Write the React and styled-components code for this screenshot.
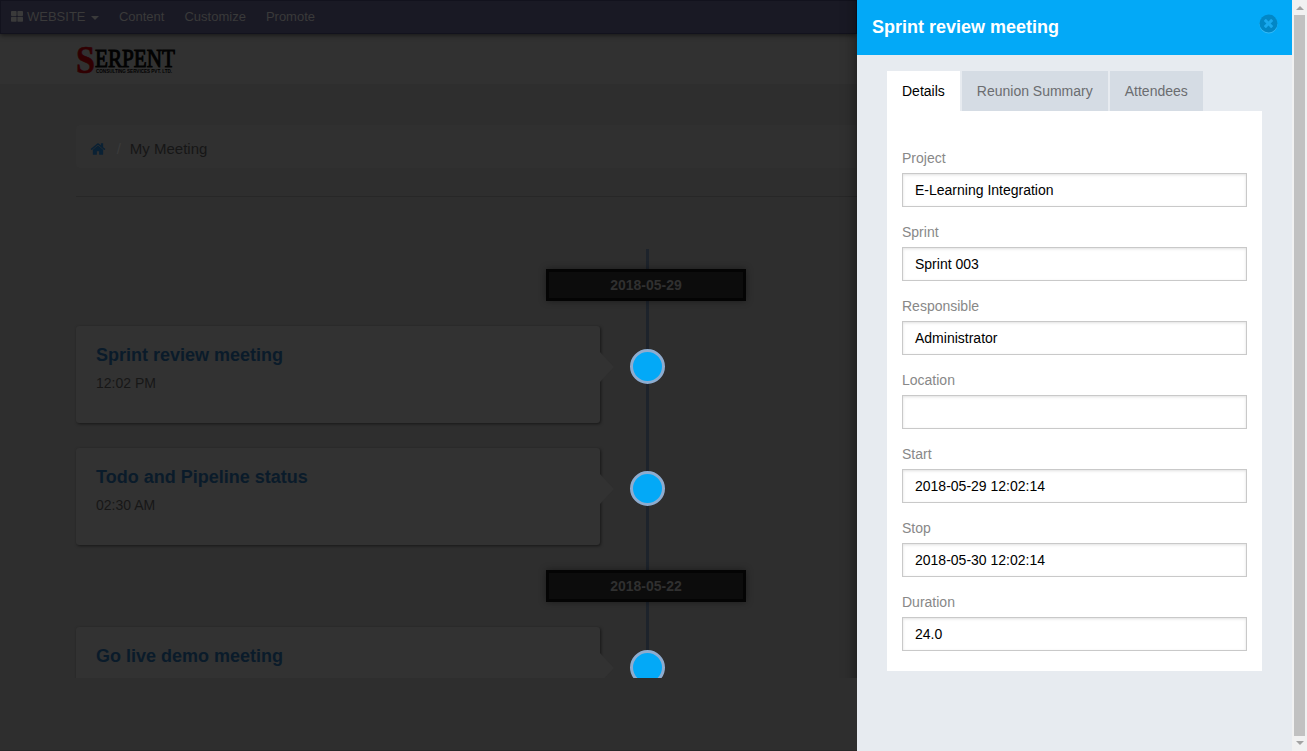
import React from "react";
import styled, { createGlobalStyle, css } from "styled-components";

const GlobalStyle = createGlobalStyle`
  *, *::before, *::after { box-sizing: border-box; }
  body {
    margin: 0;
    overflow: hidden;
    background: #2e2e2e;
    font-family: "Liberation Sans", Arial, sans-serif;
    font-size: 14px;
    line-height: 20px;
  }
`;

const Screen = styled.div`
  display: flex;
  width: 1307px;
  height: 751px;
  overflow: hidden;
`;

const Page = styled.div`
  flex: 1;
  min-width: 0;
  background: #2e2e2e;
  border-bottom: 1px solid #282828;
`;

const Viewport = styled.div`
  position: relative;
  height: 678px;
  overflow: hidden;

  &::after {
    content: "";
    position: absolute;
    top: -20px;
    bottom: -20px;
    left: 100%;
    width: 40px;
    box-shadow: 0 0 15px rgba(0, 0, 0, 0.5);
  }
`;

const Navbar = styled.nav`
  position: relative;
  display: flex;
  align-items: center;
  gap: 20px;
  height: 34px;
  padding: 0 10px;
  background: #191924;
  border: 1px solid #12121d;
  box-shadow: 0 1px 5px rgba(0, 0, 0, 0.6);
  color: #3a3a3a;
  font-size: 13px;
`;

const NavItem = styled.span`
  display: flex;
  align-items: center;
  height: 18px;
`;

const Caret = styled.i`
  margin: 2px 0 0 5.4px;
  border: 4px solid transparent;
  border-top-color: #3a3a3a;
  border-bottom: 0;
`;

const Header = styled.header`
  height: 50px;
  padding: 10px 0 0 76px;
  background: #313131;
`;

const LogoSvg = styled.svg`
  display: block;
  overflow: visible;
`;

const Container = styled.main`
  width: 1140px;
  padding-top: 41px;
  margin-left: 76px;
`;

const Breadcrumb = styled.div`
  display: flex;
  align-items: center;
  height: 43px;
  padding: 5px 15px 0;
  border-radius: 4px;
  background: #303030;
  color: #161616;
  font-size: 15px;
`;

const Slash = styled.span`
  margin: 0 9px 0 11.7px;
  color: #3b3b3b;
`;

const Rule = styled.hr`
  height: 1px;
  margin: 28px 0 0;
  border: 0;
  background: #272727;
`;

const Timeline = styled.section`
  position: relative;
  width: 1140px;
  height: 600px;
  margin-top: 52px;
  padding-top: 20px;

  &::before {
    content: "";
    position: absolute;
    top: 0;
    bottom: 0;
    left: 570px;
    width: 3px;
    background: #1d232b;
  }
`;

const DateBadge = styled.div`
  position: relative;
  width: 200px;
  height: 32px;
  margin: 0 0 25px 470px;
  border: 3px solid #040404;
  background: #0c0c0c;
  box-shadow: 0 0 7px rgba(0, 0, 0, 0.4);
  color: #303030;
  font-weight: bold;
  line-height: 27px;
  text-align: center;
`;

const Entry = styled.div`
  display: flex;
  gap: 30px;
  height: 97px;
  margin-bottom: 25px;
`;

const Card = styled.article`
  position: relative;
  width: 524px;
  padding: 19px 20px;
  border-radius: 3px;
  background: #323232;
  box-shadow: 1px 1px 3px rgba(0, 0, 0, 0.5);

  &::after {
    content: "";
    position: absolute;
    top: 26px;
    left: 100%;
    border: 15px solid transparent;
    border-left: 14px solid #323232;
    border-right: 0;
  }
`;

const CardTitle = styled.h4`
  margin: 0 0 8px;
  color: #0a1b2a;
  font-size: 18px;
  line-height: 20px;
`;

const CardTime = styled.div`
  color: #171717;
`;

const Dot = styled.span`
  position: relative;
  width: 35px;
  height: 35px;
  margin-top: 23px;
  border: 3px solid #8eaccf;
  border-radius: 50%;
  background: #03a9f7;
`;

const Panel = styled.aside`
  position: relative;
  width: 435px;
  background: #e7ebf0;
`;

const PanelHeader = styled.div`
  display: flex;
  justify-content: space-between;
  height: 55px;
  padding: 13px 13.5px 0 15px;
  background: #03a9f7;
`;

const PanelTitle = styled.h3`
  margin: 4px 0 0;
  color: #fff;
  font-size: 18px;
  line-height: 20px;
`;

const Tabs = styled.div`
  display: flex;
  gap: 2px;
  margin: 16px 30px 0;
`;

const Tab = styled.div`
  height: 40px;
  padding: 0 15px;
  background: #d5dce4;
  color: #6b6d70;
  line-height: 40px;
  ${({ $active }) => $active && css`
    background: #fff;
    color: #000;
  `}
`;

const Form = styled.div`
  height: 560px;
  margin: 0 30px;
  padding: 37px 15px 0;
  background: #fff;
`;

const Field = styled.label`
  display: block;
  margin-bottom: 15px;
  color: #888;
`;

const Input = styled.div`
  height: 34px;
  margin-top: 5px;
  padding: 0 12px;
  border: 1px solid #c9c9c9;
  background: #fff;
  box-shadow: inset 0 1px 3px rgba(0, 0, 0, 0.12);
  color: #000;
  line-height: 32px;
`;

const Scrollbar = styled.div`
  display: flex;
  flex-direction: column;
  align-items: center;
  width: 15px;
  background: #f1f1f1;
`;

const Thumb = styled.div`
  flex: 1;
  width: 11px;
  background: #c1c1c1;
`;

const ArrowSlot = styled.div`
  display: flex;
  justify-content: center;
  height: 15px;
  padding-top: ${({ $up }) => ($up ? 6 : 5)}px;
`;

const Arrow = styled.i`
  height: 4px;
  border: 4px solid transparent;
  ${({ $up }) => $up
    ? css`border-top: 0; border-bottom-color: #a3a3a3;`
    : css`border-bottom: 0; border-top-color: #a3a3a3;`}
`;

const GridMark = styled.svg`
  margin: 0 4px 2px 0;
`;

const GridIcon = () => (
  <GridMark width="12" height="11" viewBox="0 0 12 11" fill="#3a3a3a">
    <rect width="5.6" height="5" rx=".7" />
    <rect x="6.4" width="5.6" height="5" rx=".7" />
    <rect y="5.8" width="5.6" height="5" rx=".7" />
    <rect x="6.4" y="5.8" width="5.6" height="5" rx=".7" />
  </GridMark>
);

const HomeMark = styled.svg`
  margin: 0 -1px 1px -1px;
`;

const HomeIcon = () => (
  <HomeMark width="16" height="16" viewBox="0 0 1792 1792" fill="#0a2134">
    <path d="M1472 992v480q0 26-19 45t-45 19h-384v-384h-256v384h-384q-26 0-45-19t-19-45v-480q0-1 .5-3t.5-3l575-474 575 474q1 2 1 6zm223-69l-62 74q-8 9-21 11h-3q-13 0-21-7l-692-577-692 577q-12 8-24 7-13-2-21-11l-62-74q-8-10-7-23.5t11-21.5l719-599q32-26 76-26t76 26l244 204v-195q0-14 9-23t23-9h192q14 0 23 9t9 23v408l219 182q10 8 11 21.5t-7 23.5z" />
  </HomeMark>
);

const CloseIcon = () => (
  <svg width="21" height="21" viewBox="0 0 1792 1792">
    <circle cx="896" cy="981" r="768" fill="#35baf8" />
    <circle cx="896" cy="896" r="768" fill="#0287c6" />
    <path fill="#1aa9ee" d="M1277 1122q0-26-19-45l-181-181 181-181q19-19 19-45 0-27-19-46l-90-90q-19-19-46-19-26 0-45 19l-181 181-181-181q-19-19-45-19-27 0-46 19l-90 90q-19 19-19 46 0 26 19 45l181 181-181 181q-19 19-19 45 0 27 19 46l90 90q19 19 46 19 26 0 45-19l181-181 181 181q19 19 45 19 27 0 46-19l90-90q19-19 19-46z" />
  </svg>
);

const Logo = () => (
  <LogoSvg width="104" height="40" viewBox="0 0 104 40" fontFamily="'Liberation Serif', serif" fontWeight="bold">
    <text x="0" y="28.5" fontSize="39" textLength="19" lengthAdjust="spacingAndGlyphs" fill="#300002" stroke="#300002" strokeWidth=".6">S</text>
    <text x="19" y="23" fontSize="25" fontWeight="normal" textLength="80" lengthAdjust="spacingAndGlyphs" fill="#020202" stroke="#020202" strokeWidth="1">ERPENT</text>
    <text x="20" y="28.5" fontSize="5" fontFamily="'Liberation Sans', sans-serif" textLength="76" lengthAdjust="spacingAndGlyphs" fill="#020202">CONSULTING SERVICES PVT. LTD.</text>
  </LogoSvg>
);

const days = [
  { date: "2018-05-29", meetings: [["Sprint review meeting", "12:02 PM"], ["Todo and Pipeline status", "02:30 AM"]] },
  { date: "2018-05-22", meetings: [["Go live demo meeting", ""]] },
];

const fields = [
  ["Project", "E-Learning Integration"],
  ["Sprint", "Sprint 003"],
  ["Responsible", "Administrator"],
  ["Location", ""],
  ["Start", "2018-05-29 12:02:14"],
  ["Stop", "2018-05-30 12:02:14"],
  ["Duration", "24.0"],
];

export default function App() {
  return (
    <>
      <GlobalStyle />
      <Screen>
        <Page>
          <Viewport>
            <Navbar>
              <NavItem><GridIcon />WEBSITE<Caret /></NavItem>
              <NavItem>Content</NavItem>
              <NavItem>Customize</NavItem>
              <NavItem>Promote</NavItem>
            </Navbar>
            <Header><Logo /></Header>
            <Container>
              <Breadcrumb><HomeIcon /><Slash>/</Slash>My Meeting</Breadcrumb>
              <Rule />
              <Timeline>
                {days.map((day) => (
                  <React.Fragment key={day.date}>
                    <DateBadge>{day.date}</DateBadge>
                    {day.meetings.map(([title, time]) => (
                      <Entry key={title}>
                        <Card>
                          <CardTitle>{title}</CardTitle>
                          <CardTime>{time}</CardTime>
                        </Card>
                        <Dot />
                      </Entry>
                    ))}
                  </React.Fragment>
                ))}
              </Timeline>
            </Container>
          </Viewport>
        </Page>
        <Panel>
          <PanelHeader>
            <PanelTitle>Sprint review meeting</PanelTitle>
            <CloseIcon />
          </PanelHeader>
          <Tabs>
            <Tab $active>Details</Tab>
            <Tab>Reunion Summary</Tab>
            <Tab>Attendees</Tab>
          </Tabs>
          <Form>
            {fields.map(([label, value]) => (
              <Field key={label}>
                {label}
                <Input>{value}</Input>
              </Field>
            ))}
          </Form>
        </Panel>
        <Scrollbar>
          <ArrowSlot $up><Arrow $up /></ArrowSlot>
          <Thumb />
          <ArrowSlot><Arrow /></ArrowSlot>
        </Scrollbar>
      </Screen>
    </>
  );
}
